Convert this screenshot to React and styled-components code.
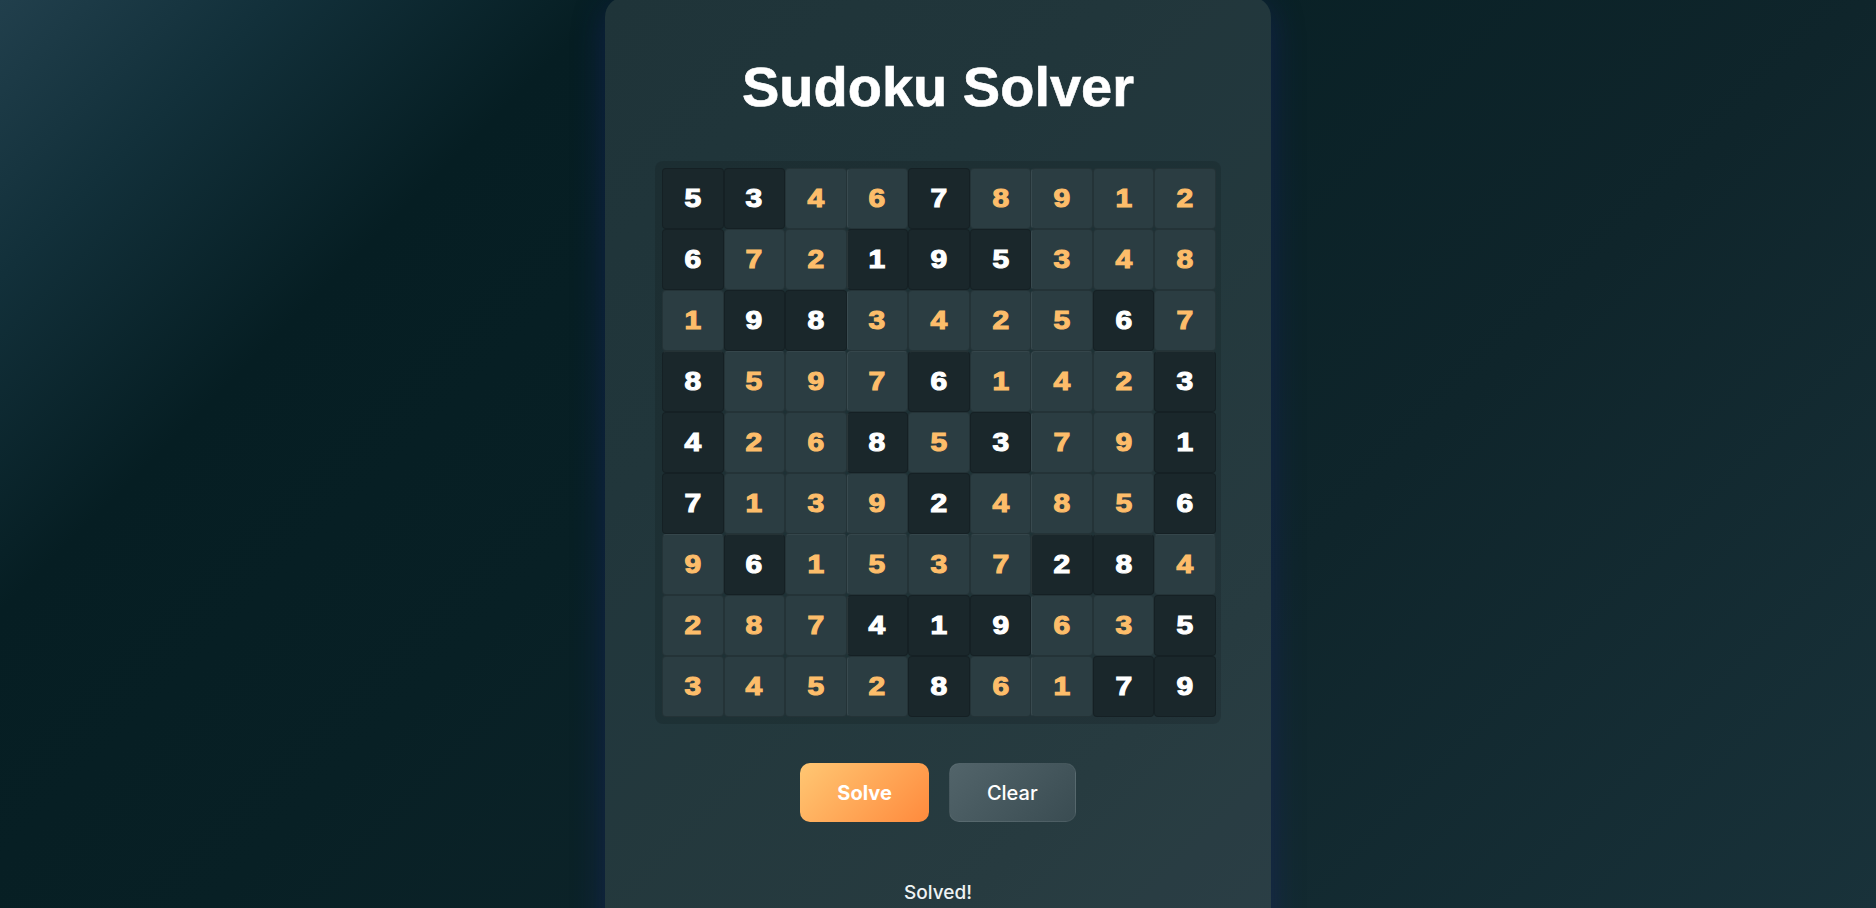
import React from 'react'
import styled, { createGlobalStyle } from 'styled-components'

const puzzle = [
  [5, 3, 0, 0, 7, 0, 0, 0, 0],
  [6, 0, 0, 1, 9, 5, 0, 0, 0],
  [0, 9, 8, 0, 0, 0, 0, 6, 0],
  [8, 0, 0, 0, 6, 0, 0, 0, 3],
  [4, 0, 0, 8, 0, 3, 0, 0, 1],
  [7, 0, 0, 0, 2, 0, 0, 0, 6],
  [0, 6, 0, 0, 0, 0, 2, 8, 0],
  [0, 0, 0, 4, 1, 9, 0, 0, 5],
  [0, 0, 0, 0, 8, 0, 0, 7, 9],
]

const solution = [
  [5, 3, 4, 6, 7, 8, 9, 1, 2],
  [6, 7, 2, 1, 9, 5, 3, 4, 8],
  [1, 9, 8, 3, 4, 2, 5, 6, 7],
  [8, 5, 9, 7, 6, 1, 4, 2, 3],
  [4, 2, 6, 8, 5, 3, 7, 9, 1],
  [7, 1, 3, 9, 2, 4, 8, 5, 6],
  [9, 6, 1, 5, 3, 7, 2, 8, 4],
  [2, 8, 7, 4, 1, 9, 6, 3, 5],
  [3, 4, 5, 2, 8, 6, 1, 7, 9],
]

const GlobalStyle = createGlobalStyle`
  * { box-sizing: border-box; }
  body {
    margin: 0;
    font-family: "Liberation Sans", Arial, sans-serif;
  }
`

function App() {
  const cells = solution.map((row, r) =>
    row.map((value, c) => {
      const given = puzzle[r][c] !== 0
      return (
        <Cell key={r + '-' + c} $given={given} $boxLeft={c % 3 === 0 && c > 0} $boxTop={r % 3 === 0 && r > 0}>
          <Digit $given={given}>{value}</Digit>
        </Cell>
      )
    })
  )

  return (
    <>
      <GlobalStyle />
      <Page>
        <Card>
          <Title>Sudoku Solver</Title>
          <Board>{cells}</Board>
          <Actions>
            <SolveButton>Solve</SolveButton>
            <ClearButton>Clear</ClearButton>
          </Actions>
          <Status>Solved!</Status>
        </Card>
      </Page>
    </>
  )
}

const Page = styled.div`
  height: 100vh;
  overflow: hidden;
  display: flex;
  justify-content: center;
  align-items: flex-start;
  background: linear-gradient(
    135deg,
    #213f4c 0%,
    #12303a 10%,
    #061e23 22%,
    #082025 40%,
    #0f252b 67%,
    #19323a 100%
  );
`

const Card = styled.div`
  margin-top: -3px;
  padding: 57px 50px 40px;
  border-radius: 20px;
  background: rgba(255, 255, 255, 0.1);
  box-shadow: 0 8px 32px 0 rgba(31, 38, 135, 0.37);
  display: flex;
  flex-direction: column;
  align-items: center;
`

const Title = styled.h1`
  margin: 0 0 42px;
  font-family: "Liberation Sans", Arial, sans-serif;
  font-size: 56px;
  font-weight: 700;
  color: #ffffff;
  -webkit-text-stroke: 0.6px #ffffff;
`

const Board = styled.div`
  width: 566px;
  padding: 7px 5px 7px 7px;
  border-radius: 8px;
  background: rgba(0, 0, 0, 0.12);
  display: grid;
  grid-template-columns: repeat(9, 1fr);
  grid-auto-rows: 61px;
`

const Cell = styled.div`
  display: flex;
  align-items: center;
  justify-content: center;
  border-radius: 4px;
  border: 1px solid rgba(0, 0, 0, 0.16);
  border-left-color: ${(p) => (p.$boxLeft ? 'rgba(255,255,255,0.07)' : 'rgba(0,0,0,0.16)')};
  border-top-color: ${(p) => (p.$boxTop ? 'rgba(255,255,255,0.05)' : 'rgba(0,0,0,0.16)')};
  background: ${(p) => (p.$given ? '#1a272b' : '#2b3d42')};
`

const Digit = styled.span`
  display: inline-block;
  font-family: "Liberation Sans", Arial, sans-serif;
  font-weight: 700;
  font-size: 25px;
  line-height: 1;
  transform: scaleX(1.2);
  -webkit-text-stroke: 1.1px currentColor;
  color: ${(p) => (p.$given ? '#ffffff' : '#fdbd6a')};
`

const Actions = styled.div`
  margin-top: 39px;
  display: flex;
  gap: 20px;
`

const BaseButton = styled.button`
  height: 59px;
  padding: 0 37px;
  border-radius: 10px;
  font-family: Inter, "Noto Sans", sans-serif;
  font-size: 20px;
  color: #ffffff;
  cursor: pointer;
`

const SolveButton = styled(BaseButton)`
  border: none;
  font-weight: 700;
  background: linear-gradient(135deg, #ffc773 0%, #ff8a3d 100%);
`

const ClearButton = styled(BaseButton)`
  border: 1px solid rgba(255, 255, 255, 0.05);
  font-weight: 500;
  background: linear-gradient(135deg, #52646a 0%, #3a4c52 100%);
`

const Status = styled.p`
  margin: 59px 0 0;
  font-family: Inter, "Noto Sans", sans-serif;
  font-size: 19px;
  font-weight: 500;
  color: #eef3f4;
`

export default App
